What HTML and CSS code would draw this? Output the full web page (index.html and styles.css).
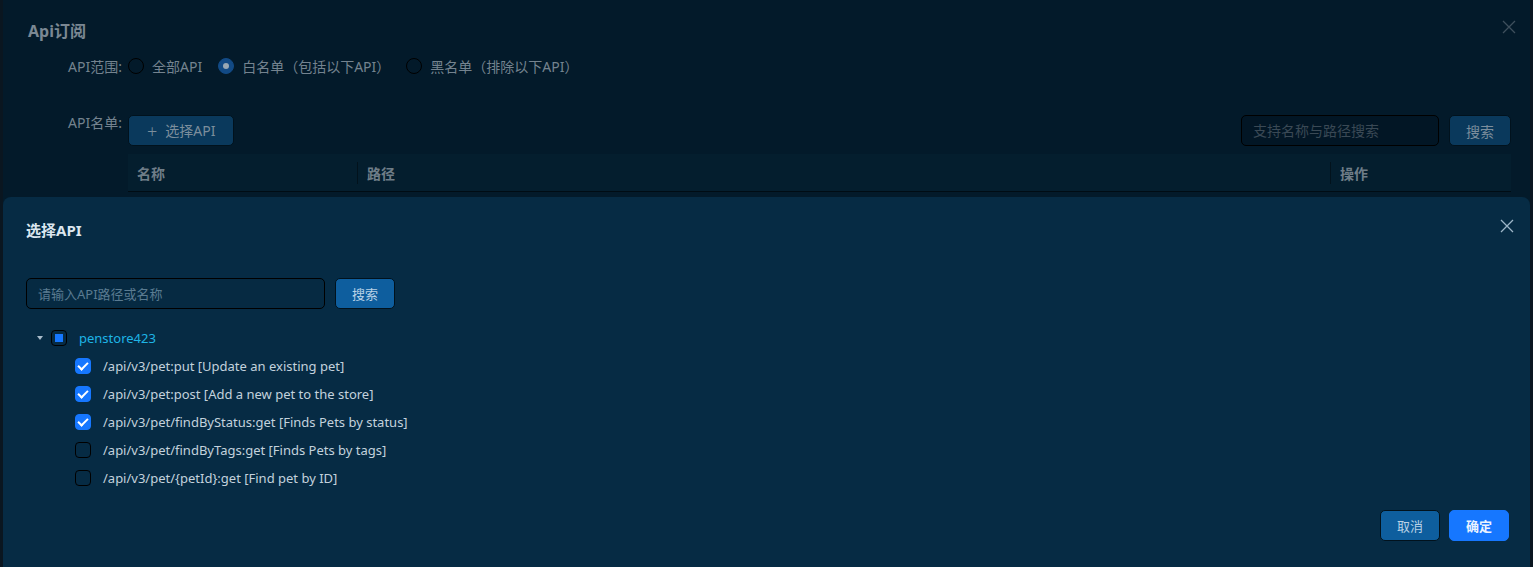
FILE: index.html
```html
<!DOCTYPE html>
<html lang="zh-CN">
<head>
  <meta charset="UTF-8"/>
  <title>Api订阅</title>
  <link rel="stylesheet" href="styles.css">
</head>
<body>
<div class="sub-modal">
  <div class="sub-header">
    <span class="sub-title">Api订阅</span>
    <svg class="close-x dim" width="14" height="14" viewBox="0 0 14 14"><path d="M1 1L13 13M13 1L1 13"/></svg>
  </div>
  <div class="form-row">
    <span class="form-label">API范围:</span>
    <label class="radio"><span class="radio-dot"></span>全部API</label>
    <label class="radio"><span class="radio-dot on"></span>白名单（包括以下API）</label>
    <label class="radio"><span class="radio-dot"></span>黑名单（排除以下API）</label>
  </div>
  <div class="form-row list-row">
    <span class="form-label">API名单:</span>
    <div class="list-body">
      <div class="list-tools">
        <button class="btn-dim wide"><span class="plus">+</span>选择API</button>
        <div class="tools-right">
          <input class="input-dim" placeholder="支持名称与路径搜索">
          <button class="btn-dim">搜索</button>
        </div>
      </div>
      <div class="table-head">
        <div class="th th-name">名称</div>
        <div class="th th-path">路径</div>
        <div class="th th-op">操作</div>
      </div>
    </div>
  </div>
</div>

<div class="pick-modal">
  <div class="pick-header">
    <span class="pick-title">选择API</span>
    <svg class="close-x" width="14" height="14" viewBox="0 0 14 14"><path d="M1 1L13 13M13 1L1 13"/></svg>
  </div>
  <div class="pick-search">
    <input class="input" placeholder="请输入API路径或名称">
    <button class="btn">搜索</button>
  </div>
  <div class="tree">
    <div class="tree-node">
      <span class="caret"></span>
      <span class="check half"></span>
      <span class="node-name">penstore423</span>
    </div>
    <div class="tree-leaf"><span class="check on"></span>/api/v3/pet:put [Update an existing pet]</div>
    <div class="tree-leaf"><span class="check on"></span>/api/v3/pet:post [Add a new pet to the store]</div>
    <div class="tree-leaf"><span class="check on"></span>/api/v3/pet/findByStatus:get [Finds Pets by status]</div>
    <div class="tree-leaf"><span class="check"></span>/api/v3/pet/findByTags:get [Finds Pets by tags]</div>
    <div class="tree-leaf"><span class="check"></span>/api/v3/pet/{petId}:get [Find pet by ID]</div>
  </div>
  <div class="pick-footer">
    <button class="btn">取消</button>
    <button class="btn primary">确定</button>
  </div>
</div>
</body>
</html>
```

FILE: styles.css
```css
body {
    margin: 0;
    background: #0a1620;
    font-family: "Noto Sans", "Noto Sans CJK SC", sans-serif;
    font-size: 13px;
    height: 567px;
    overflow: hidden;
}
button, input {
    font-family: inherit;
    font-size: 13px;
}

/* back dialog (dimmed) */
.sub-modal {
    margin: 0 3px;
    height: 567px;
    background: #031a2a;
    color: #74838f;
    font-size: 14px;
    padding: 15px 19px 0 25px;
    box-sizing: border-box;
}
.sub-modal button, .sub-modal input {
    font-size: 14px;
}
.sub-header {
    display: flex;
    justify-content: space-between;
    align-items: center;
    height: 30px;
}
.sub-title {
    font-size: 16px;
    font-weight: bold;
    color: #7b8893;
}
.close-x {
    stroke: #9db6c8;
    stroke-width: 1.3;
    fill: none;
}
.close-x.dim {
    stroke: #3e4f5c;
    margin-top: -6px;
    margin-right: -5px;
}
.form-row {
    display: flex;
    align-items: center;
    margin-top: 6px;
    height: 30px;
}
.form-label {
    width: 100px;
    text-align: right;
    padding-right: 6px;
    box-sizing: border-box;
    flex-shrink: 0;
}
.radio {
    display: flex;
    align-items: center;
    gap: 8px;
    margin-right: 16px;
}
.radio-dot {
    width: 16px;
    height: 16px;
    border: 1px solid #000;
    border-radius: 50%;
    box-sizing: border-box;
    display: flex;
    align-items: center;
    justify-content: center;
}
.radio-dot.on {
    background: #124a85;
    border-color: #124a85;
}
.radio-dot.on::after {
    content: "";
    width: 6px;
    height: 6px;
    border-radius: 50%;
    background: #9aa8b4;
}
.list-row {
    align-items: flex-start;
    margin-top: 34px;
    height: auto;
}
.list-row .form-label {
    line-height: 16px;
}
.list-body {
    flex: 1;
}
.list-tools {
    display: flex;
    justify-content: space-between;
}
.tools-right {
    display: flex;
    gap: 10px;
}
.btn-dim {
    height: 31px;
    padding: 0 16px;
    background: #0a395c;
    color: #7c8e9c;
    border: 1px solid #01121d;
    border-radius: 5px;
}
.btn-dim.wide {
    padding: 0 18px;
}
.plus {
    font-size: 18px;
    margin-right: 8px;
    font-weight: 300;
    vertical-align: -2px;
}
.input-dim {
    width: 198px;
    height: 31px;
    box-sizing: border-box;
    padding: 0 11px;
    background: #021625;
    border: 1px solid #000;
    border-radius: 5px;
    color: #7c8e9c;
}
.input-dim::placeholder {
    color: #3a4955;
}
.table-head {
    display: flex;
    margin-top: 8px;
    height: 37px;
    background: #041e2e;
    border-bottom: 1px solid #000c14;
    font-weight: bold;
    color: #6f7d88;
}
.th {
    display: flex;
    align-items: center;
    padding-left: 9px;
}
.th-name { width: 220px; }
.th-path { flex: 1; border-left: 1px solid #02121c; height: 22px; align-self: center; }
.th-op { width: 171px; border-left: 1px solid #02121c; height: 22px; align-self: center; }

/* front dialog */
.pick-modal {
    position: fixed;
    top: 197px;
    left: 3px;
    right: 3px;
    height: 380px;
    background: #062b44;
    border-radius: 8px 8px 0 0;
    padding: 0 21px 0 23px;
    color: #c3d2dd;
}
.pick-header {
    display: flex;
    justify-content: space-between;
    align-items: center;
    height: 64px;
}
.pick-header .close-x {
    margin-top: -6px;
    margin-right: -5px;
}
.pick-title {
    font-size: 15px;
    font-weight: bold;
    color: #dbe6ef;
}
.pick-search {
    display: flex;
    gap: 10px;
    margin-top: 17px;
}
.input {
    width: 299px;
    height: 31px;
    box-sizing: border-box;
    padding: 0 11px;
    background: #062a42;
    border: 1px solid #000;
    border-radius: 5px;
    color: #c3d2dd;
}
.input::placeholder {
    color: #5a7b91;
}
.btn {
    height: 31px;
    padding: 0 16px;
    background: #0e5e9e;
    color: #b9d2e6;
    border: 1px solid #01121d;
    border-radius: 5px;
}
.btn.primary {
    background: #1677ff;
    border-color: #1677ff;
    color: #eaf3ff;
    font-weight: bold;
}
.tree {
    margin-top: 15px;
}
.tree-node, .tree-leaf {
    display: flex;
    align-items: center;
    height: 28px;
}
.tree-node {
    padding-left: 11px;
}
.caret {
    width: 0;
    height: 0;
    border-left: 3px solid transparent;
    border-right: 3px solid transparent;
    border-top: 4px solid #a9bccb;
    margin-right: 8px;
}
.node-name {
    color: #1eb5e6;
    margin-left: 12px;
    font-size: 13px;
}
.tree-leaf {
    padding-left: 49px;
    gap: 12px;
}
.check {
    width: 16px;
    height: 16px;
    box-sizing: border-box;
    border: 1px solid #000;
    border-radius: 4px;
    display: flex;
    align-items: center;
    justify-content: center;
    flex-shrink: 0;
}
.check.on {
    background: #1677ff;
    border-color: #1677ff;
}
.check.on::after {
    content: "";
    width: 4px;
    height: 8px;
    border: solid #fff;
    border-width: 0 2px 2px 0;
    transform: rotate(45deg);
    margin-top: -2px;
}
.check.half::after {
    content: "";
    width: 8px;
    height: 8px;
    background: #1677ff;
}
.pick-footer {
    display: flex;
    justify-content: flex-end;
    gap: 9px;
    margin-top: 18px;
}
```
